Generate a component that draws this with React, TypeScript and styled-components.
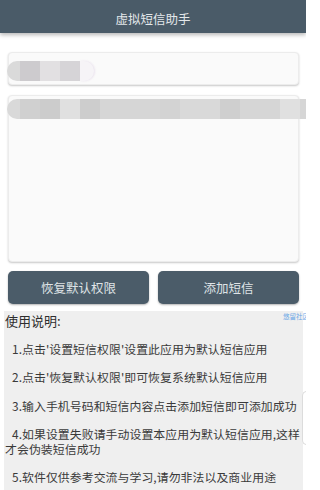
import React from "react";
import styled, { createGlobalStyle } from "styled-components";

const GlobalStyle = createGlobalStyle`
  html, body {
    margin: 0;
    padding: 0;
    background: #ffffff;
  }
  body {
    width: 306px;
    height: 490px;
    overflow: hidden;
    font-family: "Noto Sans CJK SC", "Noto Sans", sans-serif;
  }
`;

const Page = styled.div`
  width: 306px;
  height: 490px;
  display: flex;
  flex-direction: column;
  background: #ffffff;
  position: relative;
`;

const TitleBar = styled.header`
  height: 33px;
  flex-shrink: 0;
  display: flex;
  align-items: center;
  justify-content: center;
  background: #4a5b68;
  box-shadow: 0 2px 4px rgba(0, 0, 0, 0.28);
  color: #e4e8eb;
  font-size: 12.5px;
  padding-top: 3px;
  box-sizing: border-box;
  position: relative;
  z-index: 1;
`;

const Form = styled.div`
  display: flex;
  flex-direction: column;
  padding: 0 7px 0 8px;
`;

const Field = styled.div<{ $height: number; $gap: number }>`
  position: relative;
  height: ${p => p.$height}px;
  margin-top: ${p => p.$gap}px;
  box-sizing: border-box;
  border: 1px solid #ececec;
  border-radius: 4px;
  background: #fafafa;
  box-shadow: 0 1px 2px rgba(0, 0, 0, 0.22);
`;

const Mosaic = styled.div<{ $top: number; $left: number }>`
  position: absolute;
  top: ${p => p.$top}px;
  left: ${p => p.$left}px;
  height: 20px;
  display: flex;
`;

const Cell = styled.div<{ $first?: boolean }>`
  height: 100%;
  border-radius: ${p => (p.$first ? "10px 0 0 10px" : "0")};
`;

const Glow = styled.div`
  width: 14px;
  height: 20px;
  border-radius: 0 10px 10px 0;
  background: #f6f4f7;
  box-shadow: 1px 0 2px rgba(230, 220, 235, 0.8);
`;

const ButtonRow = styled.div`
  display: grid;
  grid-template-columns: 1fr 1fr;
  gap: 9px;
  margin-top: 9px;
`;

const ActionButton = styled.button`
  height: 33px;
  border: none;
  border-radius: 5px;
  background: #4b5c69;
  box-shadow: 0 1px 2px rgba(0, 0, 0, 0.3);
  color: #dfe3e6;
  font-family: inherit;
  font-size: 12.5px;
  padding: 0;
  cursor: pointer;
`;

const Guide = styled.section`
  position: relative;
  flex: 1;
  margin: 7px 3px 0 4px;
  background: #efefef;
  color: #3a3a3a;
`;

const GuideTitle = styled.div`
  font-size: 13px;
  line-height: 14px;
  padding: 3px 0 0 1px;
  color: #2e2e2e;
`;

const GuideItem = styled.p`
  margin: 14px 0 0 0;
  padding-left: 1px;
  text-indent: 7px;
  font-size: 11.9px;
  line-height: 14.4px;
  letter-spacing: 0.05px;
`;

const Credit = styled.span`
  position: absolute;
  top: 1px;
  right: -6px;
  font-size: 6.5px;
  line-height: 8px;
  color: #6aa6e6;
  white-space: nowrap;
`;

const SideHandle = styled.div`
  position: absolute;
  top: 80px;
  right: -4px;
  width: 4px;
  height: 52px;
  border: 1px solid #dcdcdc;
  border-right: none;
  border-radius: 5px 0 0 5px;
  background: #ffffff;
`;

type Block = { w: number; c: string };

const phoneBlocks: Block[] = [
  { w: 13, c: "#dadada" },
  { w: 20, c: "#cdcbce" },
  { w: 20, c: "#e2e0e2" },
  { w: 20, c: "#d6d4d7" },
];

const messageBlocks: Block[] = [
  { w: 13, c: "#d9d9d9" },
  { w: 20, c: "#d0d0d0" },
  { w: 20, c: "#cccccc" },
  { w: 20, c: "#e0e0e0" },
  { w: 20, c: "#cdcdcd" },
  { w: 60, c: "#d6d6d6" },
  { w: 20, c: "#d3d3d3" },
  { w: 40, c: "#d9d9d9" },
  { w: 20, c: "#cfcfcf" },
  { w: 40, c: "#d6d6d6" },
  { w: 20, c: "#e0e0e0" },
  { w: 8, c: "#d6d6d6" },
];

const steps = [
  "1.点击'设置短信权限'设置此应用为默认短信应用",
  "2.点击'恢复默认权限'即可恢复系统默认短信应用",
  "3.输入手机号码和短信内容点击添加短信即可添加成功",
  "4.如果设置失败请手动设置本应用为默认短信应用,这样才会伪装短信成功",
  "5.软件仅供参考交流与学习,请勿非法以及商业用途",
];

const Blocks: React.FC<{ blocks: Block[]; top: number; left: number; glow?: boolean }> = ({ blocks, top, left, glow }) => (
  <Mosaic $top={top} $left={left}>
    {blocks.map((b, i) => (
      <Cell key={i} $first={i === 0} style={{ width: b.w, background: b.c }} />
    ))}
    {glow && <Glow />}
  </Mosaic>
);

export default function App() {
  return (
    <>
      <GlobalStyle />
      <Page>
        <TitleBar>虚拟短信助手</TitleBar>
        <Form>
          <Field $height={33} $gap={19}>
            <Blocks blocks={phoneBlocks} top={8} left={-2} glow />
          </Field>
          <Field $height={167} $gap={10}>
            <Blocks blocks={messageBlocks} top={3} left={-2} />
          </Field>
          <ButtonRow>
            <ActionButton>恢复默认权限</ActionButton>
            <ActionButton>添加短信</ActionButton>
          </ButtonRow>
        </Form>
        <Guide>
          <Credit>悠留社区</Credit>
          <GuideTitle>使用说明:</GuideTitle>
          {steps.map(s => (
            <GuideItem key={s}>{s}</GuideItem>
          ))}
          <SideHandle />
        </Guide>
      </Page>
    </>
  );
}
